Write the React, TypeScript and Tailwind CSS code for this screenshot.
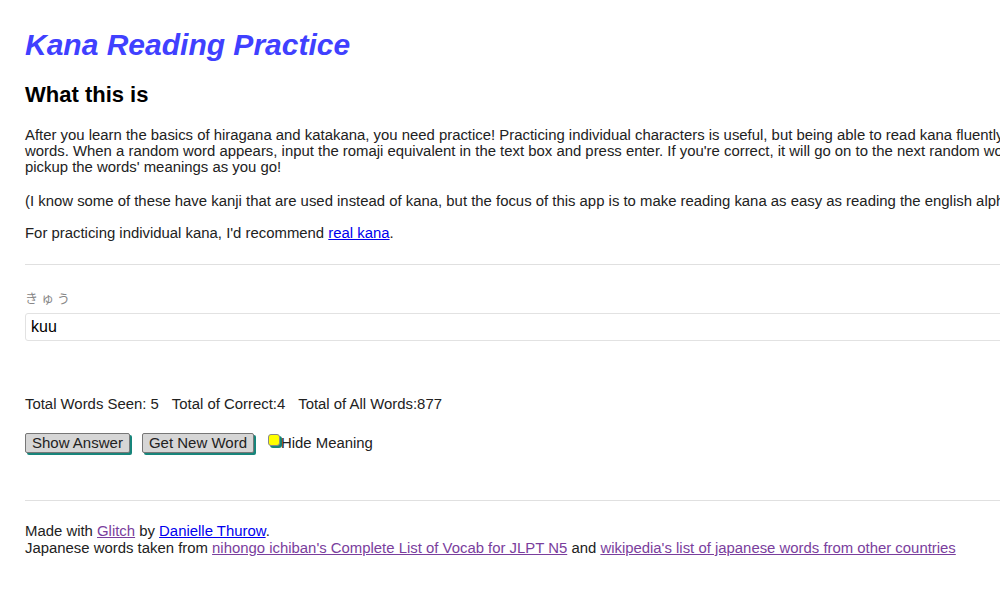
import React from 'react';

export default function App() {
  return (
    <div className="w-[1000px] h-[613px] overflow-hidden bg-white">
      <div className="w-[1400px] px-[25px] text-[14.9px] leading-[16px] text-[#222] font-['Liberation_Sans',Arial,sans-serif]">
        {/* Title */}
        <h1 className="pt-[27px] text-[30px] leading-[36px] font-bold italic text-[#4040ff]">Kana Reading Practice</h1>
        <h2 className="mt-[19px] text-[22px] leading-[26px] font-bold text-black">What this is</h2>

        {/* About */}
        <p className="mt-[19px]">
          After you learn the basics of hiragana and katakana, you need practice! Practicing individual characters is useful, but being able to read kana fluently requires reading real words.
          <br />
          words. When a random word appears, input the romaji equivalent in the text box and press enter. If you're correct, it will go on to the next random word. Hopefully you'll also
          <br />
          pickup the words' meanings as you go!
        </p>
        <p className="mt-[18px]">
          (I know some of these have kanji that are used instead of kana, but the focus of this app is to make reading kana as easy as reading the english alphabet.)
        </p>
        <p className="mt-[16px]">
          For practicing individual kana, I'd recommend{' '}
          <a href="#" className="text-[#0000ee] underline">real kana</a>.
        </p>

        <hr className="mt-[23px] border-t border-[#e0e0e0]" />

        {/* Practice */}
        <div className="mt-[25px] text-[13px] leading-[16px] tracking-[3px] text-[#888] font-['Noto_Sans_CJK_JP',sans-serif]">きゅう</div>
        <input
          readOnly
          value="kuu"
          className="mt-[7px] w-[1200px] h-[28px] px-[5px] border border-[#e2e2e2] rounded-[3px] text-[16px] text-black outline-none font-['Liberation_Sans',Arial,sans-serif]"
        />

        <div className="mt-[55px] flex gap-[13px]">
          <span>Total Words Seen: 5</span>
          <span>Total of Correct:4</span>
          <span>Total of All Words:877</span>
        </div>

        <div className="mt-[21px] flex items-start gap-[12px]">
          <button className="h-[20px] px-[6px] bg-[#d6d6d6] border border-[#777] rounded-[2px] shadow-[2px_2px_0_#17857b] text-[15px] leading-[16px] text-[#222]">Show Answer</button>
          <button className="h-[20px] px-[6px] bg-[#d6d6d6] border border-[#777] rounded-[2px] shadow-[2px_2px_0_#17857b] text-[15px] leading-[16px] text-[#222]">Get New Word</button>
          <label className="ml-[2px] flex items-start gap-[1px] leading-[18px]">
            <span className="mt-[1px] w-[12px] h-[12px] bg-[#ffff00] border border-[#888] rounded-[3px] shadow-[2px_2px_0_#17857b]" />
            <span className="mt-[1px]">Hide Meaning</span>
          </label>
        </div>

        <hr className="mt-[47px] border-t border-[#e0e0e0]" />

        {/* Footer */}
        <div className="mt-[22px] leading-[17px]">
          <div>
            Made with <a href="#" className="text-[#7a3e9d] underline">Glitch</a> by{' '}
            <a href="#" className="text-[#0000ee] underline">Danielle Thurow</a>.
          </div>
          <div>
            Japanese words taken from{' '}
            <a href="#" className="text-[#7a3e9d] underline">nihongo ichiban's Complete List of Vocab for JLPT N5</a> and{' '}
            <a href="#" className="text-[#7a3e9d] underline">wikipedia's list of japanese words from other countries</a>
          </div>
        </div>
      </div>
    </div>
  );
}
